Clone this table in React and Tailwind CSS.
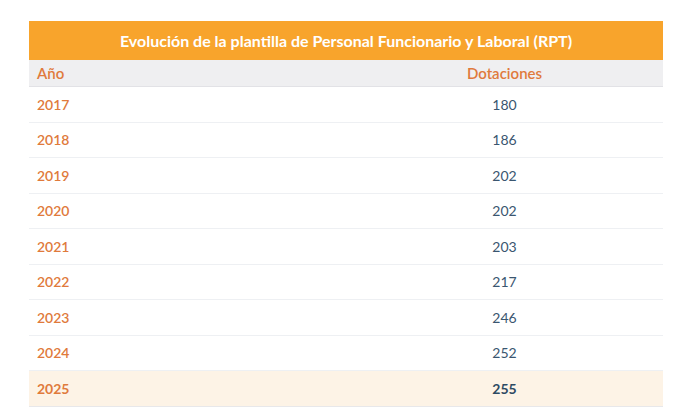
import React from "react";

const rows = [
  ["2017", "180"],
  ["2018", "186"],
  ["2019", "202"],
  ["2020", "202"],
  ["2021", "203"],
  ["2022", "217"],
  ["2023", "246"],
  ["2024", "252"],
];

export default function App() {
  return (
    <div className="w-[680px] h-[417px] bg-white pt-[21px] pl-[29px] font-['Lato',sans-serif]">
      <div className="w-[634px]">
        <div className="h-[39px] bg-[#f8a42c] flex items-center justify-center text-white font-bold text-[16px]">
          Evolución de la plantilla de Personal Funcionario y Laboral (RPT)
        </div>
        <div className="h-[27px] bg-[#efeff1] grid grid-cols-2 items-center border-b border-[#e2e2e6] text-[#e07a3c] font-semibold text-[15px]">
          <div className="pl-2">Año</div>
          <div className="text-center">Dotaciones</div>
        </div>
        {rows.map(([y, v]) => (
          <div key={y} className="h-[35.5px] grid grid-cols-2 items-center border-b border-[#eef0f3] text-[14px]">
            <div className="pl-2 text-[#e07a3c] font-semibold">{y}</div>
            <div className="text-center text-[#3a5670]">{v}</div>
          </div>
        ))}
        <div className="h-[35.5px] grid grid-cols-2 items-center border-b border-[#e8e8ea] bg-[#fdf3e6] text-[14px] font-bold">
          <div className="pl-2 text-[#e07a3c]">2025</div>
          <div className="text-center text-[#2d4a63]">255</div>
        </div>
      </div>
    </div>
  );
}
